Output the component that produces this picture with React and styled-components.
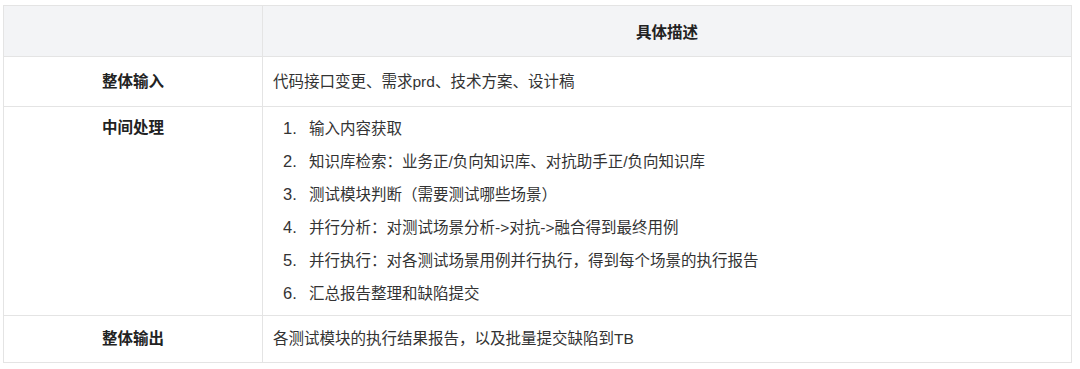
import React from "react";
import styled, { createGlobalStyle } from "styled-components";

const Global = createGlobalStyle`
  html, body { margin: 0; padding: 0; background: #fff; }
  body { font-family: "Liberation Sans", "Noto Sans CJK SC", sans-serif; }
`;

const Wrap = styled.div`
  padding: 5px 8px 0 3px;
`;

const Table = styled.table`
  width: 1069px;
  border-collapse: collapse;
  font-size: 15.5px;
  color: #333;
`;

const Th = styled.th`
  background: #f3f4f6;
  border: 1px solid #e4e4e4;
  height: 50px;
  padding: 0 10px;
  font-weight: 700;
  color: #222;
  text-align: center;
`;

const Label = styled.td`
  width: 238px;
  border: 1px solid #e4e4e4;
  padding: ${(p) => (p.$top ? "9px 10px" : "0 10px")};
  height: ${(p) => p.$h || "auto"};
  vertical-align: ${(p) => (p.$top ? "top" : "middle")};
  text-align: center;
  font-weight: 700;
  color: #222;
  line-height: 24px;
`;

const Cell = styled.td`
  border: 1px solid #e4e4e4;
  padding: ${(p) => p.$pad || "0 10px"};
  height: ${(p) => p.$h || "auto"};
  vertical-align: middle;
  line-height: 24px;
`;

const List = styled.ol`
  list-style: none;
  margin: 0;
  padding: 0;
`;

const Item = styled.li`
  display: flex;
  line-height: 33px;
`;

const Num = styled.span`
  width: 26px;
  padding-left: 10px;
  flex: none;
  font-size: 16.5px;
`;

const steps = [
  "输入内容获取",
  "知识库检索：业务正/负向知识库、对抗助手正/负向知识库",
  "测试模块判断（需要测试哪些场景）",
  "并行分析：对测试场景分析->对抗->融合得到最终用例",
  "并行执行：对各测试场景用例并行执行，得到每个场景的执行报告",
  "汇总报告整理和缺陷提交",
];

export default function App() {
  return (
    <Wrap>
      <Global />
      <Table>
        <thead>
          <tr>
            <Th style={{ width: 238 }}></Th>
            <Th>具体描述</Th>
          </tr>
        </thead>
        <tbody>
          <tr>
            <Label $h="49px">整体输入</Label>
            <Cell $h="49px">代码接口变更、需求prd、技术方案、设计稿</Cell>
          </tr>
          <tr>
            <Label $top>中间处理</Label>
            <Cell $pad="5px 10px">
              <List>
                {steps.map((s, i) => (
                  <Item key={i}>
                    <Num>{i + 1}.</Num>
                    <span>{s}</span>
                  </Item>
                ))}
              </List>
            </Cell>
          </tr>
          <tr>
            <Label $h="46px">整体输出</Label>
            <Cell $h="46px">各测试模块的执行结果报告，以及批量提交缺陷到TB</Cell>
          </tr>
        </tbody>
      </Table>
    </Wrap>
  );
}
